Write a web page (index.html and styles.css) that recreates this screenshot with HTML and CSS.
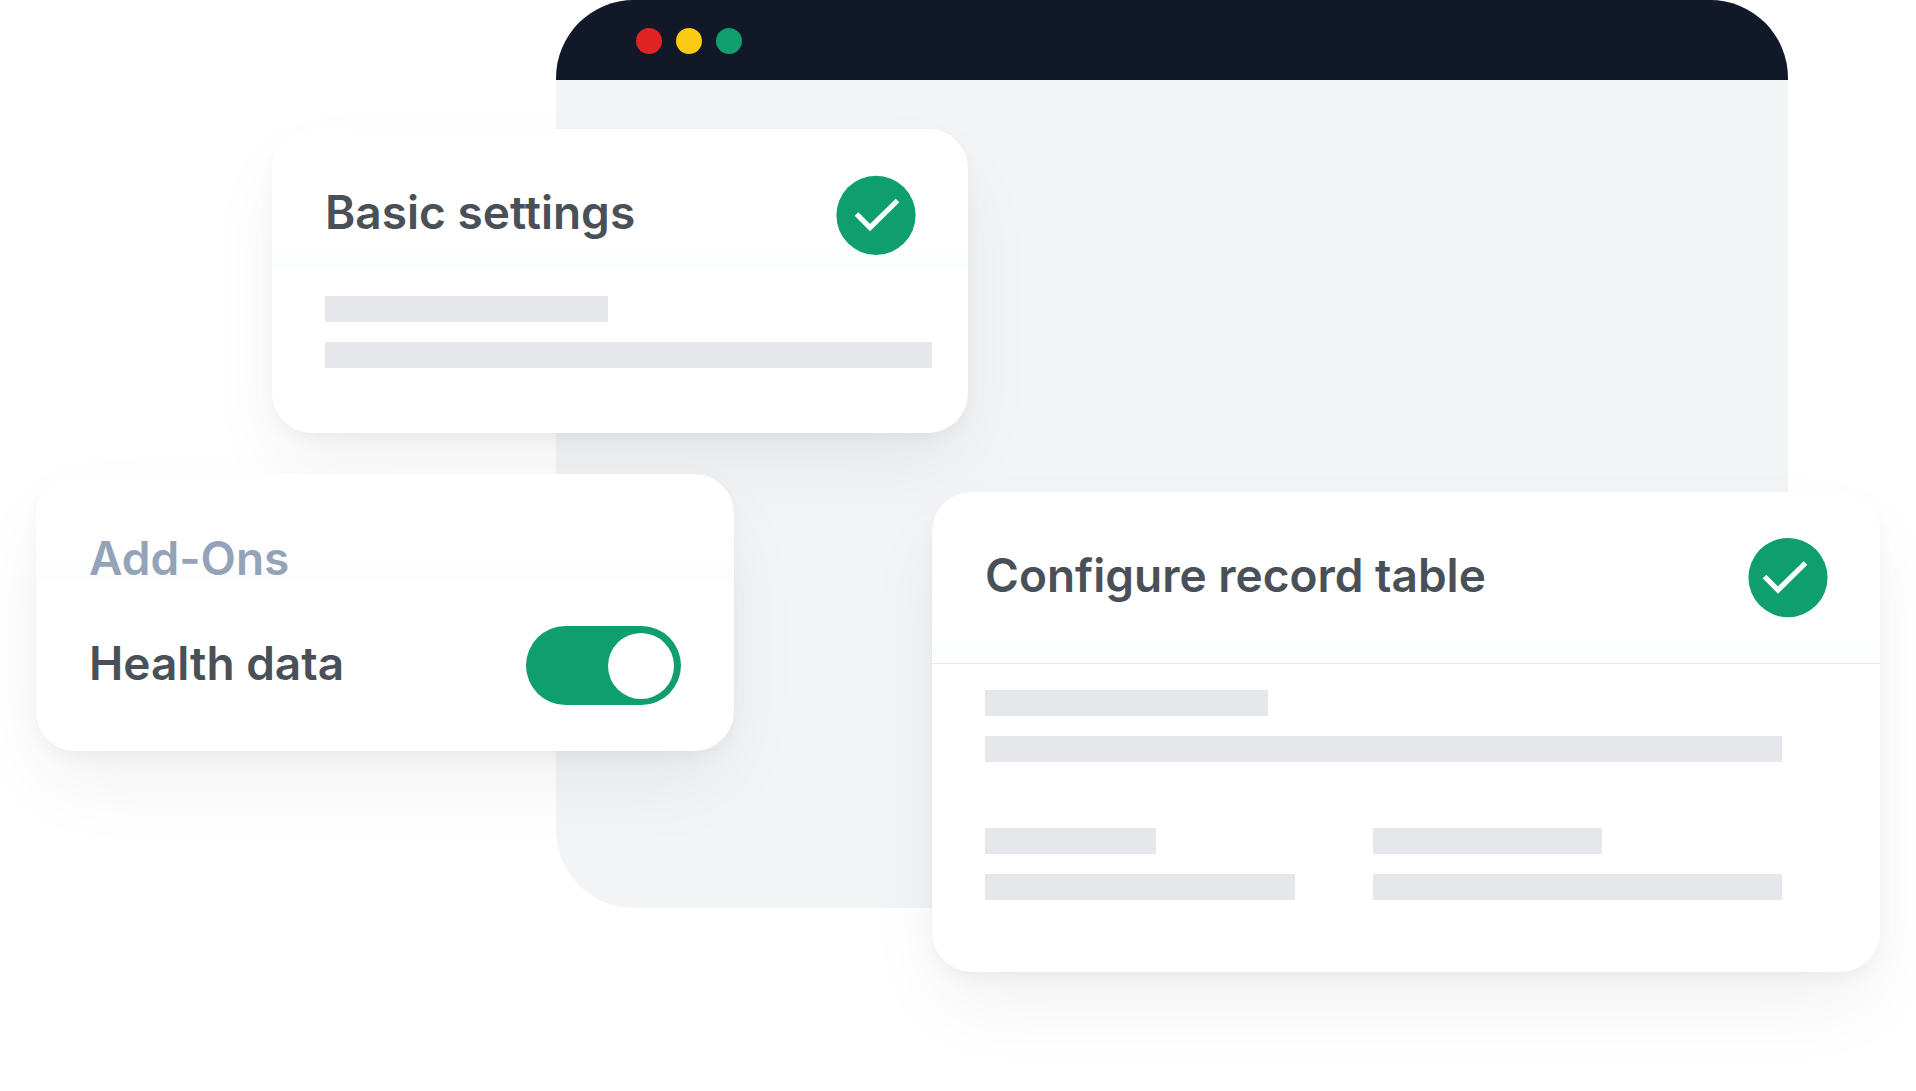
FILE: index.html
```html
<!DOCTYPE html>
<html lang="en">
<head>
<meta charset="utf-8">
<meta name="viewport" content="width=device-width, initial-scale=1">
<title>Record setup</title>
<link rel="stylesheet" href="styles.css">
</head>
<body>
<main class="scene">
  <div class="window">
    <div class="window-bar">
      <span class="dot dot-red"></span>
      <span class="dot dot-yellow"></span>
      <span class="dot dot-green"></span>
    </div>
  </div>

  <section class="card card-basic">
    <header class="card-header">
      <h2 class="title">Basic settings</h2>
      <svg class="check" viewBox="0 0 80 80" aria-hidden="true">
        <circle cx="40" cy="40.3" r="39.6" fill="#0f9f6e"/>
        <path d="M20.5 39 34 52.5 61.5 25.5" fill="none" stroke="#fff" stroke-width="5.2"/>
      </svg>
    </header>
    <div class="card-body">
      <div class="bar bar-medium"></div>
      <div class="bar"></div>
    </div>
  </section>

  <section class="card card-addons">
    <h2 class="title title-muted">Add-Ons</h2>
    <div class="setting">
      <label class="title" for="health-data">Health data</label>
      <input class="switch" type="checkbox" role="switch" id="health-data" checked>
    </div>
  </section>

  <section class="card card-record">
    <header class="card-header">
      <h2 class="title">Configure record table</h2>
      <svg class="check" viewBox="0 0 80 80" aria-hidden="true">
        <circle cx="40" cy="39.6" r="39.6" fill="#0f9f6e"/>
        <path d="M16.5 38.5 30 52 57.5 25" fill="none" stroke="#fff" stroke-width="5.2"/>
      </svg>
    </header>
    <div class="card-body">
      <div class="bar bar-medium"></div>
      <div class="bar"></div>
      <div class="columns">
        <div class="column">
          <div class="bar bar-short"></div>
          <div class="bar bar-wide"></div>
        </div>
        <div class="column">
          <div class="bar bar-small"></div>
          <div class="bar"></div>
        </div>
      </div>
    </div>
  </section>
</main>
</body>
</html>
```
FILE: styles.css
```css
* {
  box-sizing: border-box;
}

body {
  margin: 0;
  background: #fff;
  color: #4a5058;
  font-family: Inter, "Liberation Sans", sans-serif;
}

/* Cards overlap the window by sharing tracks of one grid. */
.scene {
  display: grid;
  grid-template-columns:
    minmax(0, 36fr) minmax(0, 236fr) minmax(0, 284fr) minmax(0, 178fr)
    minmax(0, 198fr) minmax(0, 36fr) minmax(0, 820fr) minmax(0, 92fr)
    minmax(0, 36fr);
  grid-template-rows: 129px auto 41px 18px auto 157px 64px;
  min-height: 100vh;
  align-content: start;
}

.window {
  grid-area: 1 / 4 / 7 / 8;
  overflow: hidden;
  border-radius: 78px;
  border-bottom-right-radius: 0;
  background: #f3f4f6;
}

.window-bar {
  display: flex;
  align-items: center;
  gap: 14px;
  height: 80px;
  padding: 2px 80px 0;
  background: #111827;
}

.dot {
  width: 26px;
  height: 26px;
  border-radius: 50%;
}

.dot-red {
  background: #e02424;
}

.dot-yellow {
  background: #faca15;
}

.dot-green {
  background: #0f9f6e;
}

.card {
  border-radius: 40px;
  background: #fff;
  box-shadow:
    0 36px 80px -6px rgba(17, 24, 39, 0.06),
    0 8px 20px -4px rgba(17, 24, 39, 0.05);
}

.card-basic {
  grid-area: 2 / 3 / 3 / 7;
}

.card-addons {
  grid-area: 4 / 2 / 6 / 5;
  padding: 47px 53px 45px;
  background: linear-gradient(#fff 80px, #fcfdfd 105px, #fff 105px);
}

.card-record {
  grid-area: 5 / 6 / 8 / 9;
}

.card-header {
  display: flex;
  align-items: flex-start;
  justify-content: space-between;
  padding: 46px 52px 13px 53px;
  border-radius: 40px 40px 0 0;
  background: linear-gradient(#fff 80%, #fcfdfd);
}

.card-record .card-header {
  padding-bottom: 45px;
  border-bottom: 1px solid #e9eaec;
}

.title {
  margin: 0;
  font-size: 46px;
  font-weight: 600;
  line-height: 74px;
}

.title-muted {
  color: #94a3b8;
}

.check {
  flex: none;
  width: 80px;
  height: 80px;
}

.card-body {
  display: grid;
  gap: 20px;
  padding: 28px 36px 65px 53px;
}

.card-record .card-body {
  padding: 26px 98px 72px 53px;
}

.bar {
  height: 26px;
  background: #e5e7eb;
}

.bar-short {
  width: 44%;
}

.bar-small {
  width: 56%;
}

.bar-medium {
  width: 283px;
}

.bar-wide {
  width: 80%;
}

.columns {
  display: grid;
  grid-template-columns: 388fr 409fr;
  padding-top: 46px;
}

.column {
  display: grid;
  gap: 20px;
}

.setting {
  display: flex;
  align-items: flex-start;
  justify-content: space-between;
  padding-top: 31px;
}

.switch {
  display: flex;
  flex: none;
  align-items: center;
  justify-content: flex-end;
  width: 155px;
  height: 79px;
  margin: 0;
  padding: 0 7px;
  border-radius: 40px;
  background: #0f9f6e;
  appearance: none;
}

.switch::before {
  width: 66px;
  height: 66px;
  border-radius: 50%;
  background: #fff;
  content: "";
}

.switch:not(:checked) {
  justify-content: flex-start;
  background: #94a3b8;
}
```
